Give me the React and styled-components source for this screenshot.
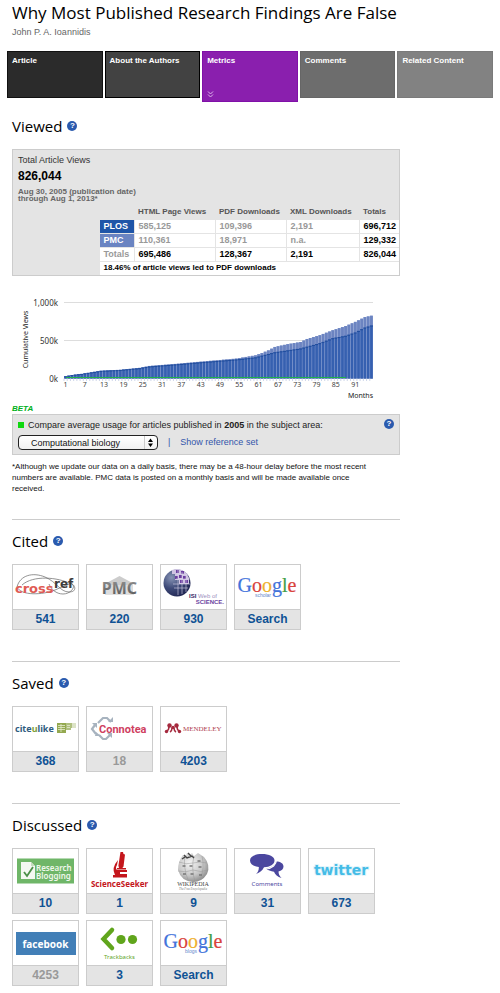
import React from "react";
import styled, { createGlobalStyle, css } from "styled-components";

const sans = '"Liberation Sans", Arial, sans-serif';
const humanist = '"Noto Sans", "Open Sans", sans-serif';
const display = '"Open Sans", "Noto Sans", sans-serif';

const GlobalStyle = createGlobalStyle`
  * { box-sizing: border-box; }
  body { margin: 0; background: #fff; color: #222; font: 9px/11px ${sans}; }
  h1, h2, p, ul { margin: 0; padding: 0; }
  ul { list-style: none; }
  a { text-decoration: none; }
`;

const Page = styled.div`
  padding-bottom: 6px;
`;

const Header = styled.header`
  padding: 0 12px;
  h1 { font: 400 17px/26px ${display}; color: #000; white-space: nowrap; }
  p { font-size: 9px; line-height: 12px; color: #666; }
`;

const Tabs = styled.nav`
  display: grid;
  grid-template-columns: repeat(5, 1fr);
  column-gap: 2px;
  align-items: start;
  height: 51px;
  margin: 13px 7px 0;
`;

const Tab = styled.a`
  display: flex;
  flex-direction: column;
  justify-content: space-between;
  height: ${(p) => (p.$active ? 51 : 47)}px;
  padding: 3px 4px;
  border: 1px solid ${(p) => p.$edge};
  background: ${(p) => p.$fill};
  color: #fff;
  font-size: 8px;
  line-height: 11px;
  font-weight: 700;
  white-space: nowrap;
`;

const Main = styled.main`
  max-width: 412px;
  padding: 0 12px;
`;

const Section = styled.section`
  padding-top: ${(p) => (p.$first ? 13 : 10)}px;
  & + & { border-top: 1px solid #ccc; }
`;

const Heading = styled.div`
  display: flex;
  align-items: center;
  gap: 5px;
  height: 22px;
  h2 { font: 400 15px/22px ${display}; color: #000; }
`;

const HelpButton = styled.button`
  flex: none;
  width: 10px;
  height: 10px;
  padding: 0;
  border: 0;
  border-radius: 50%;
  background: #2a5aae;
  color: #fff;
  font: 700 8px/10px ${sans};
  text-align: center;
`;

const Panel = styled.div`
  border: 1px solid #ccc;
  background: #e4e4e4;
`;

const ViewsPanel = styled(Panel)`
  margin-top: 12px;
`;

const Summary = styled.div`
  padding: 5px 5px 0;
  color: #333;
  strong { display: block; margin-top: 3px; font-size: 12px; line-height: 15px; color: #000; }
  p { margin-top: 4px; font-size: 8px; line-height: 7px; font-weight: 700; color: #666; }
`;

const ViewsTable = styled.table`
  width: 300px;
  max-width: 100%;
  margin: 3px 0 0 auto;
  border-collapse: collapse;
  table-layout: fixed;
  font-size: 9px;
  line-height: 12px;
  font-weight: 700;
  text-align: left;
  white-space: nowrap;
  th, td { height: 14px; padding: 0 0 0 4px; }
  thead th { color: #555; font-size: 8px; }
  tbody td, tfoot td { border: 1px solid #e4e4e4; border-right: 0; background: #fff; color: #999; }
  tfoot td { border-bottom: 0; font-size: 8px; }
`;

const RowLabel = styled.th`
  border: 1px solid #e4e4e4;
  background: ${(p) => p.$fill || "#fff"};
  color: ${(p) => (p.$fill ? "#fff" : "#999")};
`;

const Cell = styled.td`
  && { ${(p) => p.$strong && css`color: #000;`} }
`;

const Chart = styled.svg`
  display: block;
  width: 100%;
  margin-top: 14px;
  font-family: ${humanist};
`;

const Beta = styled.div`
  margin-top: 3px;
  font-size: 8px;
  line-height: 11px;
  font-style: italic;
  font-weight: 700;
  color: #00b020;
`;

const ComparePanel = styled(Panel)`
  display: flex;
  justify-content: space-between;
  align-items: flex-start;
  padding: 4px 5px;
`;

const CompareLabel = styled.label`
  display: flex;
  align-items: center;
  gap: 4px;
  height: 12px;
`;

const Swatch = styled.span`
  width: 6px;
  height: 6px;
  background: #0fd80f;
`;

const CompareRow = styled.div`
  display: flex;
  align-items: center;
  gap: 10px;
  margin-top: 4px;
  color: #3355aa;
  a { color: #3355aa; }
`;

const SelectBox = styled.div`
  position: relative;
  width: 140px;
  select {
    appearance: none;
    display: block;
    width: 100%;
    height: 15px;
    padding: 0 16px 0 12px;
    border: 1px solid #222;
    border-radius: 4px;
    background: linear-gradient(#fff, #f1f1f1);
    color: #111;
    font: 9px/12px ${sans};
  }
  svg { position: absolute; right: 1px; top: 1px; pointer-events: none; }
`;

const Note = styled.p`
  && { margin: 6px 0 25px; }
  padding-right: 24px;
  font-size: 8px;
  line-height: 11px;
  color: #111;
`;

const CardList = styled.ul`
  display: flex;
  flex-wrap: wrap;
  gap: 6px 7px;
  padding: 12px 0 31px;
  ${(p) => p.$last && css`padding-bottom: 0;`}
`;

const Card = styled.li`
  width: 67px;
  border: 1px solid #ccc;
  background: #fff;
  a { display: block; }
  svg { display: block; width: 65px; height: 44px; }
`;

const Count = styled.span`
  display: block;
  height: 20px;
  border-top: 1px solid #ccc;
  background: #e4e4e4;
  font-size: 12px;
  line-height: 18px;
  font-weight: 700;
  text-align: center;
  color: ${(p) => (p.$muted ? "#999" : "#0f5294")};
`;

const Art = ({ children, label }) => (
  <svg viewBox="0 0 65 44" role="img" aria-label={label}>{children}</svg>
);

const Crossref = () => (
  <Art label="CrossRef">
    <g fill="none" stroke="#666" strokeWidth=".7">
      <path d="M4 22C7 10 20 7 32 12s15 15 24 15 6-8 1-9" />
      <path d="M9 20C20 10 45 12 58 19M4 22c4 9 26 8 38 3s16-8 18-5-3 9-10 9-12-5-14-10" />
    </g>
    <text x="2" y="28" fontFamily="DejaVu Sans" fontWeight="700" fontSize="13" fill="#df5b54">cross</text>
    <text x="41" y="23" fontFamily="DejaVu Sans" fontWeight="700" fontSize="12" fill="#3c3c3c">ref</text>
  </Art>
);

const Pmc = () => (
  <Art label="PubMed Central">
    <defs>
      <linearGradient id="pmc" x1="0" y1="0" x2="0" y2="1">
        <stop offset="0" stopColor="#999" /><stop offset="1" stopColor="#555" />
      </linearGradient>
    </defs>
    <path d="M32.500 11l13 7v2h-26v-2z" fill="#ccc" />
    <path d="M19 20h27v9H19z" fill="#ddd" />
    <text x="32.500" y="28.500" textAnchor="middle" fontFamily="Noto Sans" fontWeight="700" fontSize="16" fill="url(#pmc)">PMC</text>
    <path d="M18 29.500h29" stroke="#ccc" strokeWidth=".6" />
  </Art>
);

const Isi = () => (
  <Art label="ISI Web of Science">
    <defs>
      <radialGradient id="isi" cx=".3" cy=".3" r=".8">
        <stop offset="0" stopColor="#8794b5" /><stop offset=".5" stopColor="#3e4a78" /><stop offset="1" stopColor="#1f2450" />
      </radialGradient>
    </defs>
    <circle cx="16" cy="18" r="13.500" fill="url(#isi)" />
    <path d="M15 4q10 0 13 9v6H18v-4h-4V9h-3V5z" fill="#cfc3e2" />
    <g fill="#6b3fa0">
      <path d="M15 5h3v3h-3zM20 6h3v3h-3zM14 11h3v3h-3zM18 10h3v3h-3zM22 11h3v3h-3zM19 15h3v3h-3zM24 15h3v3h-3z" />
    </g>
    <path d="M15 9h12M15 14h14M12 19h17M13 23h14M17 4v26M21 7v22M25 9v18" stroke="#d9d5ea" strokeWidth=".6" />
    <text x="28" y="33" fontFamily="Liberation Sans" fontSize="6" fill="#9c8fc0"><tspan fontWeight="700" fill="#33225f">ISI</tspan> Web of</text>
    <text x="63" y="39" textAnchor="end" fontFamily="Liberation Sans" fontWeight="700" fontSize="6" fill="#6b3fa0">SCIENCE.</text>
  </Art>
);

const Google = ({ sub }) => (
  <Art label={`Google ${sub}`}>
    <text x="2.500" y="27" fontFamily="Liberation Serif" fontSize="20" strokeWidth=".2">
      <tspan fill="#4273db" stroke="#4273db">G</tspan>
      <tspan fill="#d9433c" stroke="#d9433c">o</tspan>
      <tspan fill="#efb02e" stroke="#efb02e">o</tspan>
      <tspan fill="#4273db" stroke="#4273db">g</tspan>
      <tspan fill="#43a047" stroke="#43a047">l</tspan>
      <tspan fill="#d9433c" stroke="#d9433c">e</tspan>
    </text>
    <text x="36" y="32" textAnchor="end" fontFamily="Liberation Sans" fontSize="5" fill="#6688cc">{sub}</text>
  </Art>
);

const CiteULike = () => (
  <Art label="CiteULike">
    <text x="2" y="25" fontFamily="Noto Sans" fontWeight="700" fontSize="9" fill="#2f5c80">
      cite<tspan fill="#7f9f3a">u</tspan>like
    </text>
    <path d="M44 16h9v10h-9z" fill="#94a950" />
    <path d="M53 16h5v7h-5zM58 16h1v5h-1z" fill="#b0c080" />
    <path d="M59 16h4v5h-4z" fill="#dce3c6" />
    <path d="M45 18.500h7M45 20.500h7M45 22.500h7M48 17v8M54 18.500h3M54 20.500h3" stroke="#e6ecd0" strokeWidth=".8" />
  </Art>
);

const Connotea = () => (
  <Art label="Connotea">
    <g fill="none" stroke="#a7b3bf" strokeWidth="2.200">
      <path d="M11 16l5-5h4l4 4M8 18l-3 4 4 5M12 28l4 4h3l4-4" />
    </g>
    <path d="M21 15h5v-5zM5 16h5v5zM8 29h6l-5-4zM20 26h5v5z" fill="#a7b3bf" />
    <text x="12" y="26" fontFamily="Roboto" fontWeight="700" fontSize="11" fill="#cf3f5f">Connotea</text>
  </Art>
);

const Mendeley = () => (
  <Art label="Mendeley">
    <g fill="#a52a3e">
      <circle cx="8.500" cy="18.500" r="2.200" /><circle cx="15.500" cy="18.500" r="2.200" /><circle cx="12" cy="20.500" r="1.800" />
      <circle cx="5.500" cy="24.500" r="1.700" /><circle cx="18.500" cy="24.500" r="1.700" />
    </g>
    <path d="M6 24q2-1 2-5M18 24q-2-1-2-5M9 25q2-1 2-4M15 25q-2-1-2-4" fill="none" stroke="#a52a3e" strokeWidth="1.500" />
    <text x="22" y="24" fontFamily="Liberation Serif" fontSize="7" fill="#b04050">MENDELEY</text>
  </Art>
);

const ResearchBlogging = () => (
  <Art label="Research Blogging">
    <path d="M4 9.500h57v25H4z" fill="#6fb668" />
    <path d="M8 13h10l4 4v13H8z" fill="#f4f8f2" />
    <path d="M18 13v4h4z" fill="#c5dcc0" />
    <path d="M11 23l3 4 6-9" fill="none" stroke="#4b8f48" strokeWidth="1.800" />
    <text fontFamily="Noto Sans" fontWeight="600" fontSize="8" fill="#eff8ec">
      <tspan x="23" y="22">Research</tspan><tspan x="23" y="30">Blogging</tspan>
    </text>
  </Art>
);

const ScienceSeeker = () => (
  <Art label="ScienceSeeker">
    <g fill="#c4161c">
      <path d="M33.500 3h2.500l.5 2 1.500.5-1.500 12-1.500 2-3-.6-.6-2.200L33 6zM31 11l-1 5q-2 3 0 5h10v2h-7v2h7v3.500H26V26h2q-4-7 3-15z" />
      <path d="M30 19h9v1.500h-9z" />
    </g>
    <text x="32.500" y="38" textAnchor="middle" fontFamily="Noto Sans" fontWeight="700" fontSize="8" fill="#c4161c">ScienceSeeker</text>
  </Art>
);

const Wikipedia = () => (
  <Art label="Wikipedia">
    <defs>
      <radialGradient id="wiki" cx=".4" cy=".35" r=".7">
        <stop offset="0" stopColor="#f4f4f4" /><stop offset=".6" stopColor="#c8c8c8" /><stop offset="1" stopColor="#888" />
      </radialGradient>
    </defs>
    <path d="M22 6l3 1 1-3 3 2 2-2 2 3 4-3 6 4q7 8 3 17-5 8-14 8-12-1-15-12 0-9 5-15z" fill="url(#wiki)" />
    <g fill="none" stroke="#999" strokeWidth=".5">
      <path d="M18 13q7 3 14 1t14 0M17 22q8 2 15-1 8 3 15 0M24 6q-2 12 3 25M33 7q-3 12 1 26M41 7q3 12-2 24" />
    </g>
    <path d="M23 6l3 3 5-2 2 2M21 10l3-2M27 4l3 3" fill="none" stroke="#444" strokeWidth="1.400" />
    <path d="M21.500 17h3M28.500 17h3M36.500 12h3M37.500 18h3M29.500 25h3M38 26h3M22 25h3" stroke="#777" strokeWidth="1.600" />
    <text x="32" y="37" textAnchor="middle" fontFamily="Liberation Serif" fontSize="6" fill="#444">WIKIPEDIA</text>
    <text x="32" y="41" textAnchor="middle" fontFamily="Liberation Serif" fontStyle="italic" fontSize="3" fill="#777">The Free Encyclopedia</text>
  </Art>
);

const Comments = () => (
  <Art label="Comments">
    <g fill="#4b479f">
      <path d="M27 5c7 0 12.500 2.500 12.500 6.500S35 18 29 18.300c-1.500 3-4 5.500-8 6.700 2-2 3-4 2.800-7C18.500 17.300 15 15 15 11.500 15 7.500 20 5 27 5z" />
      <path d="M41 12.500c4.500 0 7.500 2 7.500 5 0 2.500-2 4.300-5 5 0 2.500 1 4.500 3 6.500-4-1-6.500-3.500-7.500-6.300-3-.3-6.500-1.500-8-3.200 5-.5 9-3 10-7z" />
      <path d="M41.500 10.500c0 5-4 9-11 9.500" fill="none" stroke="#fff" strokeWidth="1.200" />
    </g>
    <text x="32" y="37" textAnchor="middle" fontFamily="Noto Sans" fontSize="6" fill="#4b479f">Comments</text>
  </Art>
);

const Twitter = () => (
  <Art label="Twitter">
    <text x="32" y="26" textAnchor="middle" fontFamily="DejaVu Sans" fontWeight="700" fontSize="14" fill="#45bce6" stroke="#e2f4fb" strokeWidth="2" strokeLinejoin="round" paintOrder="stroke">twitter</text>
  </Art>
);

const Facebook = () => (
  <Art label="Facebook">
    <path d="M3 11h60v23H3z" fill="#427fb7" />
    <text x="32.500" y="26.500" textAnchor="middle" fontFamily="Noto Sans" fontWeight="700" fontSize="10" fill="#fff">facebook</text>
  </Art>
);

const Trackbacks = () => (
  <Art label="Trackbacks">
    <path d="M25 9l-8.500 9 8.500 9" fill="none" stroke="#60a51c" strokeWidth="4.500" strokeLinecap="round" strokeLinejoin="miter" />
    <circle cx="34" cy="18.500" r="4.600" fill="#60a51c" />
    <circle cx="45.500" cy="18.500" r="4.600" fill="#60a51c" />
    <text x="32.500" y="38" textAnchor="middle" fontFamily="Noto Sans" fontSize="6" fill="#60a51c">Trackbacks</text>
  </Art>
);

const totalPoints = [[1, 28], [3, 45], [6, 60], [12, 102], [18, 115], [24, 140], [27, 165], [36, 195], [42, 218], [54, 262], [60, 305], [62, 335], [64, 370], [66, 415], [70, 452], [74, 480], [76, 520], [80, 570], [84, 635], [88, 690], [91, 745], [94, 808], [96, 826]];
const plosPoints = [[1, 28], [3, 45], [6, 60], [12, 100], [18, 112], [24, 136], [27, 158], [36, 188], [42, 210], [54, 250], [60, 278], [66, 345], [74, 395], [80, 465], [84, 530], [88, 562], [91, 605], [94, 670], [96, 697]];

const valueAt = (points, month) => {
  const i = Math.max(1, points.findIndex(([m]) => m >= month));
  const [m0, v0] = points[i - 1];
  const [m1, v1] = points[i];
  return v0 + ((month - m0) / (m1 - m0)) * (v1 - v0);
};

const months = Array.from({ length: 96 }, (_, i) => i + 1);

function ViewsChart() {
  const pitch = 309 / 96;
  const y = (v) => 88.5 - v * 0.076;
  return (
    <Chart viewBox="0 0 388 110" role="img" aria-label="Cumulative views by month">
      {[["1,000k", 12.5], ["500k", 50.5], ["0k", 88.5]].map(([label, top]) => (
        <g key={label}>
          <path d={`M52 ${top}h309`} stroke="#ddd" />
          <text x="46" y={top + 3} textAnchor="end" fontSize="8" fill="#333">{label}</text>
        </g>
      ))}
      {months.map((m) => {
        const x = 52 + (m - 1) * pitch;
        const total = y(valueAt(totalPoints, m));
        const plos = y(valueAt(plosPoints, m));
        return (
          <g key={m}>
            <rect x={x} y={total} width={pitch} height={88.5 - total} fill="#8fa3d2" />
            <rect x={x + 0.3} y={total} width={pitch - 0.6} height={plos - total} fill="#6c84c1" />
            <rect x={x} y={plos} width={pitch} height={88.5 - plos} fill="#6482c3" />
            <rect x={x + 0.4} y={plos} width={pitch - 0.8} height={88.5 - plos} fill="#3660b0" />
            <rect x={x} y={plos} width={pitch} height="1" fill="#1f4c9c" />
            <path d={`M${x} 88.500v2.500`} stroke="#b9c4df" strokeWidth=".7" />
          </g>
        );
      })}
      <path d="M54 87.500h280" stroke="#1fb14a" strokeWidth="1.200" />
      {months.filter((m) => m % 6 === 1).map((m) => (
        <text key={m} x={53.5 + (m - 1) * pitch} y="97" textAnchor="middle" fontSize="7" fill="#444">{m}</text>
      ))}
      <text x="361" y="108" textAnchor="end" fontSize="7" fill="#222">Months</text>
      <text transform="translate(16 49.500) rotate(-90)" textAnchor="middle" fontSize="7" fill="#222">Cumulative Views</text>
    </Chart>
  );
}

const Help = ({ topic }) => <HelpButton type="button" aria-label={`Help: ${topic}`}>?</HelpButton>;

const Title = ({ children }) => (
  <Heading><h2>{children}</h2><Help topic={children} /></Heading>
);

const tabs = [
  { label: "Article", fill: "#2b2b2b", edge: "#111" },
  { label: "About the Authors", fill: "#424242", edge: "#000" },
  { label: "Metrics", fill: "#8a1fae", edge: "#8010a8", active: true },
  { label: "Comments", fill: "#6d6d6d", edge: "#666" },
  { label: "Related Content", fill: "#828282", edge: "#7a7a7a" },
];

const cited = [[Crossref, "541"], [Pmc, "220"], [Isi, "930"], [() => <Google sub="scholar" />, "Search"]];
const saved = [[CiteULike, "368"], [Connotea, "18", true], [Mendeley, "4203"]];
const discussed = [
  [ResearchBlogging, "10"], [ScienceSeeker, "1"], [Wikipedia, "9"], [Comments, "31"], [Twitter, "673"],
  [Facebook, "4253", true], [Trackbacks, "3"], [() => <Google sub="blogs" />, "Search"],
];

const Cards = ({ items, last }) => (
  <CardList $last={last}>
    {items.map(([Logo, count, muted], i) => (
      <Card key={i}>
        <a href="#source"><Logo /><Count $muted={muted}>{count}</Count></a>
      </Card>
    ))}
  </CardList>
);

export default function App() {
  return (
    <Page>
      <GlobalStyle />
      <Header>
        <h1>Why Most Published Research Findings Are False</h1>
        <p>John P. A. Ioannidis</p>
      </Header>
      <Tabs>
        {tabs.map((t) => (
          <Tab key={t.label} href="#tab" $fill={t.fill} $edge={t.edge} $active={t.active}>
            {t.label}
            {t.active && (
              <svg width="7" height="7" viewBox="0 0 7 7" fill="none" stroke="#dcb5ea" aria-hidden="true">
                <path d="M1 .5l2.500 2.500L6 .5M1 3.500L3.500 6 6 3.500" />
              </svg>
            )}
          </Tab>
        ))}
      </Tabs>
      <Main>
        <Section $first>
          <Title>Viewed</Title>
          <ViewsPanel>
            <Summary>
              Total Article Views
              <strong>826,044</strong>
              <p>Aug 30, 2005 (publication date)<br />through Aug 1, 2013*</p>
            </Summary>
            <ViewsTable>
              <colgroup>
                <col width="35" /><col width="81" /><col width="71" /><col width="73" /><col width="40" />
              </colgroup>
              <thead>
                <tr>
                  <td />
                  <th scope="col">HTML Page Views</th>
                  <th scope="col">PDF Downloads</th>
                  <th scope="col">XML Downloads</th>
                  <th scope="col">Totals</th>
                </tr>
              </thead>
              <tbody>
                <tr>
                  <RowLabel scope="row" $fill="#1f55a8">PLOS</RowLabel>
                  <Cell>585,125</Cell><Cell>109,396</Cell><Cell>2,191</Cell><Cell $strong>696,712</Cell>
                </tr>
                <tr>
                  <RowLabel scope="row" $fill="#6a84c2">PMC</RowLabel>
                  <Cell>110,361</Cell><Cell>18,971</Cell><Cell>n.a.</Cell><Cell $strong>129,332</Cell>
                </tr>
                <tr>
                  <RowLabel scope="row">Totals</RowLabel>
                  <Cell $strong>695,486</Cell><Cell $strong>128,367</Cell><Cell $strong>2,191</Cell><Cell $strong>826,044</Cell>
                </tr>
              </tbody>
              <tfoot>
                <tr><Cell $strong colSpan={5}>18.46% of article views led to PDF downloads</Cell></tr>
              </tfoot>
            </ViewsTable>
          </ViewsPanel>
          <ViewsChart />
          <Beta>BETA</Beta>
          <ComparePanel>
            <div>
              <CompareLabel htmlFor="area">
                <Swatch />
                <span>Compare average usage for articles published in <b>2005</b> in the subject area:</span>
              </CompareLabel>
              <CompareRow>
                <SelectBox>
                  <select id="area" defaultValue="Computational biology">
                    <option>Computational biology</option>
                  </select>
                  <svg width="13" height="13" viewBox="0 0 13 13" aria-hidden="true">
                    <path d="M.5 0v13" stroke="#ccc" />
                    <path d="M4 6l2.500-3.500L9 6zM4 7.500L6.500 11 9 7.500z" fill="#000" />
                  </svg>
                </SelectBox>
                <span>|</span>
                <a href="#reference-set">Show reference set</a>
              </CompareRow>
            </div>
            <Help topic="reference set" />
          </ComparePanel>
          <Note>
            *Although we update our data on a daily basis, there may be a 48-hour delay before the most recent<br />
            numbers are available. PMC data is posted on a monthly basis and will be made available once<br />
            received.
          </Note>
        </Section>
        <Section>
          <Title>Cited</Title>
          <Cards items={cited} />
        </Section>
        <Section>
          <Title>Saved</Title>
          <Cards items={saved} />
        </Section>
        <Section>
          <Title>Discussed</Title>
          <Cards items={discussed} last />
        </Section>
      </Main>
    </Page>
  );
}
